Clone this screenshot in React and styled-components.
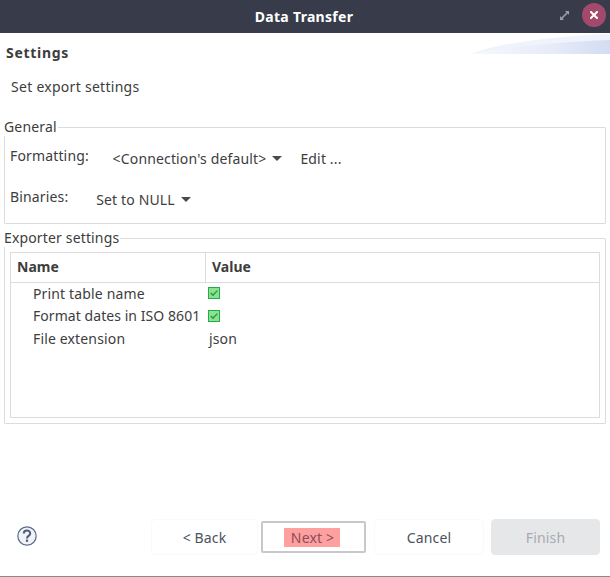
import React from 'react';
import styled, {createGlobalStyle} from 'styled-components';

const Global = createGlobalStyle`
  html, body { margin: 0; padding: 0; background: #fff; }
  body { font-family: "Noto Sans", "Open Sans", sans-serif; font-size: 14px; color: #3d3d3d; letter-spacing: 0.15px; }
`;

const Window = styled.div`
  width: 610px;
  height: 577px;
  display: flex;
  flex-direction: column;
  overflow: hidden;
  background: #fff;
  border-bottom: 1px solid #8a8a8a;
  box-sizing: border-box;
`;

const TitleBar = styled.div`
  position: relative;
  height: 33px;
  flex: none;
  display: flex;
  align-items: center;
  justify-content: center;
  padding-right: 2px;
  background: #383c4a;
  color: #fff;
  font-weight: 700;
  font-size: 14px;
  letter-spacing: 0.3px;
`;

const TitleButtons = styled.div`
  position: absolute;
  right: 4px;
  top: 3px;
  display: flex;
  align-items: center;
  gap: 13px;
`;

const CloseButton = styled.div`
  width: 24px;
  height: 24px;
  border-radius: 50%;
  background: #a34a6c;
  display: flex;
  align-items: center;
  justify-content: center;
`;

const Header = styled.div`
  position: relative;
  height: 21px;
  flex: none;
  display: flex;
  align-items: flex-end;
  padding-left: 6px;
`;

const Banner = styled.svg`
  position: absolute;
  right: 0;
  top: 1px;
`;

const HeaderTitle = styled.div`
  font-weight: 700;
  font-size: 14px;
  line-height: 20px;
  letter-spacing: 0.7px;
  position: relative;
  top: 9px;
`;

const Description = styled.div`
  margin: 23px 0 0 11px;
  line-height: 20px;
  height: 20px;
  letter-spacing: 0.28px;
`;

const Group = styled.fieldset`
  margin: ${props => props.$top}px 4px 0 4px;
  padding: 0;
  min-width: 0;
  height: ${props => props.$height}px;
  box-sizing: border-box;
  border: 1px solid #dcdcdc;
  border-radius: 1px;
`;

const GroupLegend = styled.legend`
  padding: 0;
  margin-left: -1px;
  line-height: 18px;
  padding-right: 1px;
`;

const FormRow = styled.div`
  display: flex;
  align-items: center;
  height: ${props => props.$height}px;
  margin-top: ${props => props.$top}px;
  padding-left: 5px;
`;

const FieldLabel = styled.div`
  position: relative;
  top: -3px;
  width: ${props => props.$width}px;
  flex: none;
`;

const Combo = styled.div`
  width: ${props => props.$width}px;
  height: 100%;
  flex: none;
  display: flex;
  align-items: center;
  justify-content: center;
  gap: 6px;
  box-sizing: border-box;
`;

const Caret = styled.span`
  width: 0;
  height: 0;
  border-left: 5px solid transparent;
  border-right: 5px solid transparent;
  border-top: 5px solid #4a4a4a;
`;

const Table = styled.div`
  margin: 5px 5px 0 5px;
  height: 166px;
  border: 1px solid #dcdcdc;
  box-sizing: border-box;
`;

const TableHead = styled.div`
  display: grid;
  grid-template-columns: 194px 1fr;
  height: 29px;
  border-bottom: 1px solid #dcdcdc;
  font-weight: 700;
  letter-spacing: 0;
`;

const HeadCell = styled.div`
  display: flex;
  align-items: center;
  padding: 0 0 2px 6px;
  & + & { border-left: 1px solid #dcdcdc; }
`;

const TableRow = styled.div`
  display: grid;
  grid-template-columns: 197px 1fr;
  height: 22.5px;
  padding-bottom: 2px;
  box-sizing: border-box;
  align-items: center;
`;

const NameCell = styled.div`
  padding-left: 22px;
  white-space: nowrap;
  letter-spacing: ${props => props.$tight ? 0.06 : 0.15}px;
`;

const ValueCell = styled.div`
  display: flex;
  align-items: center;
  padding-left: ${props => props.$inset || 0}px;
`;

const Footer = styled.div`
  margin-top: auto;
  height: 57px;
  display: flex;
  align-items: flex-start;
  padding-left: 17px;
  flex: none;
`;

const Help = styled.svg`
  margin: 7px 114px 0 0;
`;

const Button = styled.div`
  width: ${props => props.$width}px;
  height: 36px;
  margin-right: ${props => props.$gap}px;
  box-sizing: border-box;
  flex: none;
  display: flex;
  align-items: center;
  justify-content: center;
  border-radius: 4px;
  border: 1px solid ${props => props.$disabled ? '#e6e7e9' : '#fafafa'};
  background: ${props => props.$disabled ? '#e6e7e9' : '#fff'};
  color: ${props => props.$disabled ? '#a9abaf' : '#4a5260'};
`;

const DefaultButton = styled(Button)`
  height: 32px;
  margin-top: 2px;
  border: 2px solid #c8c8c8;
  border-radius: 2px;
`;

const Highlight = styled.span`
  background: #ffa0a0;
  color: #8a4f58;
  line-height: 19px;
  padding: 0 6px 0 7px;
  margin-right: 3px;
`;

const CheckBox = () => (
  <svg width="12" height="12" viewBox="0 0 12 12">
    <rect x="0.5" y="0.5" width="11" height="11" fill="#8ce08e" stroke="#1fae4b" />
    <path d="M2.8 6 L5 8.2 L9.3 3.6" fill="none" stroke="#1c9a40" strokeWidth="1.3" />
  </svg>
);

const App = () => (
  <Window>
    <Global />
    <TitleBar>
      Data Transfer
      <TitleButtons>
        <svg width="9" height="9" viewBox="0 0 9 9">
          <path d="M5 0h4v4L7.6 2.6 2.6 7.6 4 9H0V5l1.4 1.4 5-5z" fill="#9a9ca3" />
        </svg>
        <CloseButton>
          <svg width="8" height="8" viewBox="0 0 8 8">
            <path d="M1 1l6 6M7 1L1 7" stroke="#fff" strokeWidth="2" strokeLinecap="square" />
          </svg>
        </CloseButton>
      </TitleButtons>
    </TitleBar>
    <Header>
      <Banner width="139" height="20" viewBox="0 0 139 20">
        <defs>
          <linearGradient id="bannerFade" x1="0" x2="1" y1="0" y2="0">
            <stop offset="0" stopColor="#f7f9fd" />
            <stop offset="0.6" stopColor="#e6ebf8" />
            <stop offset="1" stopColor="#d3dcf3" />
          </linearGradient>
        </defs>
        <path d="M0 20C30 8 90 2 139 0V20Z" fill="#f0f3fb" />
        <path d="M0 20C40 12 90 8 139 6V20Z" fill="url(#bannerFade)" />
      </Banner>
      <HeaderTitle>Settings</HeaderTitle>
    </Header>
    <Description>Set export settings</Description>
    <Group $top={21} $height={106}>
      <GroupLegend>General</GroupLegend>
      <FormRow $height={35} $top={5}>
        <FieldLabel $width={89}>Formatting:</FieldLabel>
        <Combo $width={197}>&lt;Connection's default&gt;<Caret /></Combo>
        <Combo $width={50}>Edit ...</Combo>
      </FormRow>
      <FormRow $height={41} $top={3}>
        <FieldLabel $width={71}>Binaries:</FieldLabel>
        <Combo $width={125}>Set to NULL<Caret /></Combo>
      </FormRow>
    </Group>
    <Group $top={5} $height={195}>
      <GroupLegend>Exporter settings</GroupLegend>
      <Table>
        <TableHead>
          <HeadCell>Name</HeadCell>
          <HeadCell>Value</HeadCell>
        </TableHead>
        <TableRow>
          <NameCell>Print table name</NameCell>
          <ValueCell><CheckBox /></ValueCell>
        </TableRow>
        <TableRow>
          <NameCell $tight>Format dates in ISO 8601</NameCell>
          <ValueCell><CheckBox /></ValueCell>
        </TableRow>
        <TableRow>
          <NameCell>File extension</NameCell>
          <ValueCell $inset={1}>json</ValueCell>
        </TableRow>
      </Table>
    </Group>
    <Footer>
      <Help width="20" height="20" viewBox="0 0 20 20">
        <circle cx="10" cy="10" r="9.2" fill="#f2f3f6" stroke="#5b6b8c" strokeWidth="1.2" />
        <path d="M6.8 7.6c0-4 6.4-4 6.4-.2 0 2.6-3.2 2.4-3.2 5" fill="none" stroke="#4d5c7c" strokeWidth="2" />
        <rect x="8.9" y="13.6" width="2.2" height="2.2" fill="#4d5c7c" />
      </Help>
      <Button $width={107} $gap={3}>&lt; Back</Button>
      <DefaultButton $width={105} $gap={8}><Highlight>Next &gt;</Highlight></DefaultButton>
      <Button $width={110} $gap={7}>Cancel</Button>
      <Button $width={109} $gap={0} $disabled>Finish</Button>
    </Footer>
  </Window>
);

export default App;
